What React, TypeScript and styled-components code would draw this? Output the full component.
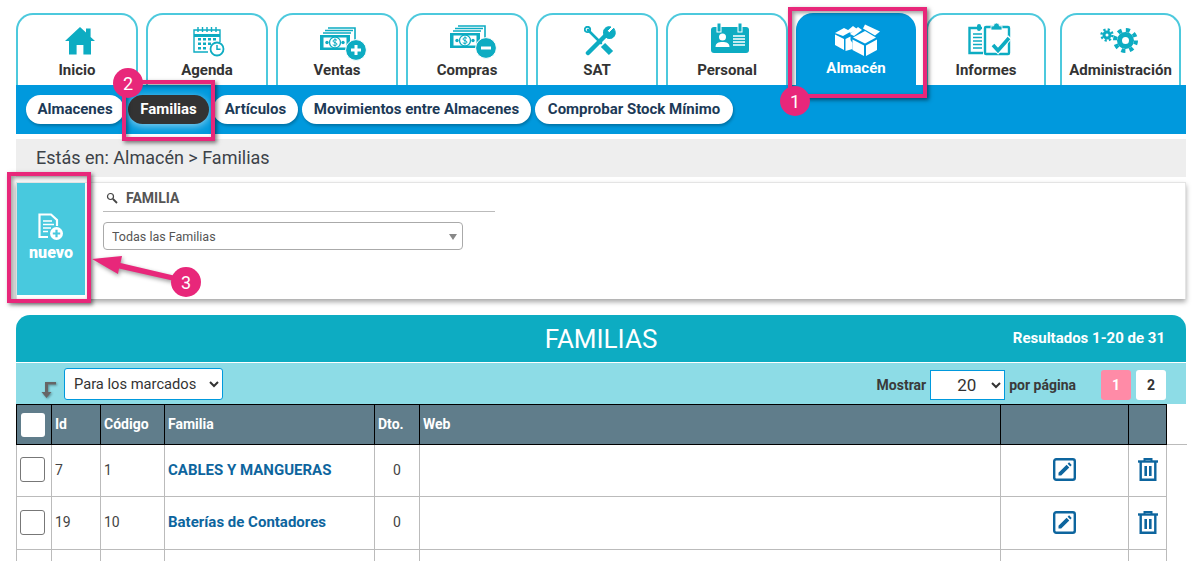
import React from "react";
import styled, { createGlobalStyle } from "styled-components";

const Global = createGlobalStyle`
  html, body { margin: 0; padding: 0; background: #fff; height: 561px; overflow: hidden; }
  body { font-family: Roboto, "Liberation Sans", sans-serif; color: #333; }
  * { box-sizing: border-box; }
`;

const TEAL = "#0dacc2";

const Page = styled.div`
  position: relative;
  width: 1192px;
  height: 561px;
  overflow: hidden;
  padding: 13px 6px 0 16px;
`;
const Tabs = styled.nav`
  display: flex;
  height: 72px;
`;
const Tab = styled.a<{ $w?: number; $after?: number; $active?: boolean }>`
  width: ${(p) => p.$w ?? 122}px;
  margin-right: ${(p) => p.$after ?? 8}px;
  height: 72px;
  display: flex;
  flex-direction: column;
  align-items: center;
  border: ${(p) => (p.$active ? "none" : "2px solid #4cc9dd")};
  border-bottom: none;
  border-radius: 17px 17px 0 0;
  background: ${(p) => (p.$active ? "#0099dd" : "#fff")};
  color: ${(p) => (p.$active ? "#fff" : "#333")};
  font-size: 15px;
  font-weight: 700;
  position: relative;
`;
const TabIcon = styled.span<{ $top: number; $h: number; $shift?: number }>`
  display: block;
  height: ${(p) => p.$h}px;
  margin-top: ${(p) => p.$top}px;
  margin-left: ${(p) => (p.$shift ?? 0) * 2}px;
  svg { display: block; }
`;
const TabLabel = styled.span`
  position: absolute;
  left: 0;
  right: 0;
  top: 46px;
  text-align: center;
  line-height: 18px;
  white-space: nowrap;
`;
const SubNav = styled.div`
  height: 49px;
  background: #0099dd;
  display: flex;
  align-items: flex-start;
  padding: 10px 0 0 10px;
  gap: 4px;
`;
const Pill = styled.a<{ $active?: boolean; $w: number }>`
  width: ${(p) => p.$w}px;
  height: 29px;
  padding-bottom: 2px;
  border-radius: 15px;
  display: flex;
  align-items: center;
  justify-content: center;
  background: ${(p) => (p.$active ? "#333" : "#fff")};
  color: ${(p) => (p.$active ? "#fff" : "#1c3a57")};
  font-weight: 700;
  font-size: 15px;
  white-space: nowrap;
  box-shadow: ${(p) => (p.$active ? "0 2px 9px rgba(255,255,255,.55)" : "1px 2px 3px rgba(0,0,0,.25)")};
`;
const Crumb = styled.div`
  margin-top: 5px;
  height: 38px;
  background: #eee;
  padding-left: 20px;
  font-size: 18px;
  line-height: 38px;
  color: #3c4248;
`;
const Filter = styled.section`
  margin-top: 5px;
  height: 117px;
  border: 1px solid #e4e4e4;
  border-bottom: none;
  display: flex;
  box-shadow: 0 3px 5px rgba(0,0,0,.35);
`;
const NewButton = styled.a`
  width: 68px;
  height: 112px;
  background: #48c9de;
  color: #fff;
  display: flex;
  flex-direction: column;
  align-items: center;
  font-weight: 900;
  font-size: 16px;
  padding-top: 30px;
  line-height: 20px;
  svg { display: block; margin-bottom: 2px; margin-left: -1px; }
`;
const FilterBody = styled.div`
  width: 392px;
  margin-left: 18px;
`;
const FilterTitle = styled.div`
  height: 29px;
  padding-top: 2px;
  border-bottom: 1px solid #bbb;
  display: flex;
  align-items: center;
  gap: 8px;
  padding-left: 3px;
  font-size: 14px;
  font-weight: 700;
  color: #555;
`;
const FilterSelectWrap = styled.div`
  position: relative;
  width: 360px;
  margin-top: 10px;
  &::after {
    content: "";
    position: absolute;
    right: 6px;
    top: 12px;
    border-left: 4px solid transparent;
    border-right: 4px solid transparent;
    border-top: 6px solid #888;
  }
`;
const FilterSelect = styled.select`
  appearance: none;
  width: 100%;
  height: 28px;
  border: 1px solid #aaa;
  border-radius: 4px;
  background: #fff;
  padding: 0 8px;
  font: 400 12.5px Roboto, sans-serif;
  color: #555;
`;
const ResultHead = styled.header`
  margin-top: 16px;
  height: 47px;
  background: ${TEAL};
  border-radius: 14px 14px 0 0;
  color: #fff;
  display: flex;
  align-items: center;
  justify-content: center;
  position: relative;
`;
const ResultTitle = styled.h1`
  margin: 0;
  font-size: 26px;
  font-weight: 400;
  line-height: 46px;
`;
const ResultCount = styled.span`
  position: absolute;
  right: 21px;
  top: 14px;
  font-size: 15px;
  font-weight: 700;
  line-height: 18px;
`;
const ToolRow = styled.div`
  margin-top: 1px;
  height: 41px;
  background: #8ddce6;
  display: flex;
  align-items: flex-start;
  padding-left: 25px;
  padding-right: 20px;
`;
const MarkIcon = styled.span`
  width: 23px;
  margin-top: 19px;
  svg { display: block; filter: drop-shadow(1px 1px 1px rgba(0,0,0,.35)); }
`;
const MarkSelect = styled.select`
  margin-top: 5px;
  width: 159px;
  height: 32px;
  border: 1px solid #0099dd;
  border-radius: 3px;
  background: #fff;
  font: 400 14.7px Roboto, sans-serif;
  color: #333;
  padding-left: 5px;
`;
const PagerArea = styled.div`
  margin-left: auto;
  display: flex;
  align-items: center;
  height: 30px;
  margin-top: 7px;
  font-size: 14px;
  font-weight: 700;
  color: #3a3a3a;
`;
const PerPage = styled.select`
  width: 75px;
  height: 30px;
  margin: 0 4px;
  border: 1px solid #0099dd;
  border-radius: 0;
  background: #fff;
  font: 400 17px Roboto, sans-serif;
  color: #333;
  padding-left: 22px;
`;
const PageBtn = styled.a<{ $on?: boolean; $left: number }>`
  width: 30px;
  height: 30px;
  margin-left: ${(p) => p.$left}px;
  border-radius: 3px;
  background: ${(p) => (p.$on ? "#ff8ba7" : "#fff")};
  color: ${(p) => (p.$on ? "#fff" : "#333")};
  display: flex;
  align-items: center;
  justify-content: center;
`;
const Table = styled.table`
  border-collapse: collapse;
  table-layout: fixed;
  width: 1170px;
`;
const Th = styled.th`
  background: #607d8b;
  border: 1px solid #000;
  height: 40px;
  padding: 0 3px 2px;
  color: #fff;
  font-size: 14px;
  font-weight: 700;
  text-align: left;
`;
const Spare = styled.th`
  border: none;
  border-bottom: 1px solid #bbb;
`;
const Td = styled.td<{ $center?: boolean; $h: number }>`
  border: 1px solid #bbb;
  height: ${(p) => p.$h}px;
  padding: 0 3px 2px;
  font-size: 14px;
  color: #444;
  text-align: ${(p) => (p.$center ? "center" : "left")};
  svg { display: block; margin: 0 auto; }
`;
const NoCell = styled.td``;
const Name = styled.a`
  color: #0d659e;
  font-size: 15px;
  font-weight: 700;
`;
const HeadCheck = styled.span`
  display: block;
  width: 24px;
  height: 24px;
  margin: 2px 0 0 1px;
  background: #fff;
  border-radius: 3px;
`;
const RowCheck = styled.span`
  display: block;
  width: 25px;
  height: 25px;
  background: #fff;
  border: 1px solid #777;
  border-radius: 3px;
`;
const Frame = styled.div<{ $x: number; $y: number; $w: number; $h: number }>`
  position: absolute;
  left: ${(p) => p.$x}px;
  top: ${(p) => p.$y}px;
  width: ${(p) => p.$w}px;
  height: ${(p) => p.$h}px;
  border: 4px solid #e8277a;
  box-shadow: 2px 2px 4px rgba(0,0,0,.5), inset 2px 2px 4px rgba(0,0,0,.4);
`;
const Badge = styled.div<{ $x: number; $y: number }>`
  position: absolute;
  left: ${(p) => p.$x - 15}px;
  top: ${(p) => p.$y - 15}px;
  width: 30px;
  height: 30px;
  border-radius: 50%;
  background: #e8277a;
  color: #fff;
  font-size: 18px;
  font-weight: 400;
  display: flex;
  align-items: center;
  justify-content: center;
`;
const ArrowMark = styled.svg`
  position: absolute;
  left: 85px;
  top: 250px;
  filter: drop-shadow(1px 2px 2px rgba(0,0,0,.4));
`;

const HomeIcon = () => (
  <svg width="30" height="28" viewBox="0 0 30 28" fill={TEAL}>
    <path d="M15 0 21 5.600V1.500h4.600V10L30 14h-4v13.500h-7.600V18h-6.800v9.500H4V14H0Z" />
  </svg>
);
const CalendarIcon = () => (
  <svg width="32" height="31" viewBox="0 0 32 31" fill="none" stroke={TEAL} strokeWidth="1.400">
    <path d="M15 26H1V4h26v12" />
    <path d="M1 9.500h26" strokeWidth="3" />
    <path d="M5 1v5M9.500 1v5M14 1v5M18.500 1v5M23 1v5" />
    <path fill={TEAL} stroke="none" d="M5 12h3v2.500H5zM10 12h3v2.500h-3zM15 12h3v2.500h-3zM20 12h3v2.500h-3zM5 16.500h3V19H5zM10 16.500h3V19h-3zM15 16.500h3V19h-3zM5 21h3v2.500H5zM10 21h3v2.500h-3z" />
    <circle cx="24" cy="23" r="6.500" fill="#fff" strokeWidth="1.800" />
    <path d="M24 19v4.300h3.500" strokeWidth="1.500" />
  </svg>
);
const MoneyIcon = ({ minus }: { minus?: boolean }) => (
  <svg width="47" height="34" viewBox="0 0 47 34" fill="none" stroke={TEAL}>
    <path d="M8 1h27v13M5 3.500h28M3 6h28" strokeWidth="1.600" />
    <rect x="0" y="8" width="30" height="15" fill="#fff" stroke="none" />
    <path d="M0 8h30v15H0ZM3.500 10.500v10h23v-10Z" fill={TEAL} stroke="none" fillRule="evenodd" />
    <circle cx="15" cy="15.500" r="5.500" fill="#fff" strokeWidth="1.300" />
    <circle cx="7" cy="15.500" r="1.700" fill={TEAL} stroke="none" />
    <circle cx="23" cy="15.500" r="1.700" fill={TEAL} stroke="none" />
    <path d="M17 13.300c-1-1-4-1-4 .8 0 2 4 1 4 3 0 1.700-3 1.800-4.200.6M15 11.300v8.400" strokeWidth="1" />
    <circle cx="36" cy="23" r="10.400" fill={TEAL} stroke="#fff" strokeWidth="1" />
    <path d={minus ? "M31 23h10" : "M31 23h10M36 18v10"} stroke="#fff" strokeWidth="3" />
  </svg>
);
const ToolsIcon = () => (
  <svg width="32" height="30" viewBox="0 0 32 30" fill="none" stroke={TEAL} strokeLinecap="round">
    <path d="M22 9 4 27" strokeWidth="4.500" />
    <path d="M29.500 2.500 25.500 6.500l-1.500-.5-.5-1.500 3.500-3.500C22 -.5 18 4 20 9l3 3c5 2 9.500-2 8-7Z" fill={TEAL} strokeWidth="1" />
    <path d="M4 4 17 17" strokeWidth="2.600" />
    <circle cx="3.500" cy="3.500" r="2.700" strokeWidth="1.800" />
    <path d="M19 19 27 27" strokeWidth="6" strokeLinecap="butt" />
  </svg>
);
const BadgeIcon = () => (
  <svg width="38" height="30" viewBox="0 0 38 30" fill={TEAL}>
    <rect y="4" width="38" height="26" rx="3" />
    <rect x="6" y="0" width="4" height="9" fill={TEAL} stroke="#fff" strokeWidth="1" />
    <rect x="27" y="0" width="4" height="9" fill={TEAL} stroke="#fff" strokeWidth="1" />
    <circle cx="11.500" cy="14" r="3.500" fill="#fff" />
    <path d="M4.500 24c0-4 3-5 7-5s7 1 7 5Z" fill="#fff" />
    <path d="M22 13h12M22 16h12M22 19h12M22 22h12" stroke="#fff" strokeWidth="1.500" />
  </svg>
);
const BoxesIcon = () => (
  <svg width="46" height="32" viewBox="0 0 46 32" fill="#fff">
    <path d="M0 9 9 4l7 3.500L8 12Z" />
    <path d="M0 10.500l9 4.500v11l-9-5Z" />
    <path d="M10.500 15l5-2.500V16l2 3v6l-7 2Z" />
    <path d="M12 7 18 2l4 3-6 4Z" />
    <path d="M15 10 23 3l4 3-8 6Z" />
    <path d="M18 13.500 30 7l11 6.500-11 6Z" />
    <path d="M30 .5l15 7-5 4-12-7Z" />
    <path d="M17.500 15.500 29 21.500v10.500L17.500 26Z" />
    <path d="M31 21.500l11-6V26l-11 6Z" />
  </svg>
);
const ReportsIcon = () => (
  <svg width="45" height="33" viewBox="0 0 45 33" fill="none" stroke={TEAL}>
    <path d="M14 5H1.500v25H15" strokeWidth="2.400" />
    <path d="M5 11h9M5 14.500h9M5 18h9M5 21.500h9M5 25h9" strokeWidth="1.600" />
    <rect x="9" y="1" width="4" height="7" rx="2" fill={TEAL} stroke="none" />
    <rect x="17" y="4" width="24" height="27" rx="1" fill="#fff" strokeWidth="2.400" />
    <path d="M23 7V3h2.500a3 3 0 0 1 6 0H34v4Z" fill={TEAL} stroke="#fff" strokeWidth=".8" />
    <path d="M24 22l6 6 12-14" strokeWidth="5" stroke="#fff" />
    <path d="M25 22l5 5.500L41 15" strokeWidth="3.600" />
  </svg>
);
const GearsIcon = () => (
  <svg width="38" height="25" viewBox="0 0 38 25" fill="none" stroke={TEAL}>
    <circle cx="7" cy="7" r="3" strokeWidth="3" />
    <circle cx="7" cy="7" r="5.500" strokeWidth="2.400" strokeDasharray="2.200 2.120" />
    <circle cx="25.500" cy="12.500" r="6" strokeWidth="5" />
    <circle cx="25.500" cy="12.500" r="10.500" strokeWidth="4" strokeDasharray="4.100 4.150" />
  </svg>
);
const NewDocIcon = () => (
  <svg width="26" height="28" viewBox="0 0 26 28" fill="none" stroke="#fff">
    <path d="M10 24H1.500V1.500H13L19 7v6" strokeWidth="2.200" />
    <path d="M5 8h9M5 11.500h11M5 15h8M5 18.500h5" strokeWidth="1.400" />
    <circle cx="18.500" cy="20.500" r="6.500" fill="#fff" stroke="none" />
    <path d="M14.800 20.500h7.400M18.500 16.800v7.400" stroke="#48c9de" strokeWidth="2.200" />
  </svg>
);
const SearchMini = () => (
  <svg width="12" height="12" viewBox="0 0 12 12" fill="none" stroke="#444" strokeWidth="1.200">
    <circle cx="4.500" cy="4.500" r="3" />
    <path d="M7 7l4 4" strokeWidth="1.800" />
  </svg>
);
const TurnIcon = () => (
  <svg width="16" height="16" viewBox="0 0 16 16" fill="#666">
    <path d="M15 0v2.500H7V10h3.500L5.500 16 .5 10H4V0Z" />
  </svg>
);
const EditIcon = () => (
  <svg width="23" height="23" viewBox="0 0 23 23" fill="none">
    <rect x="1.200" y="1.200" width="20.600" height="20.600" rx="2" stroke="#0d659e" strokeWidth="2.400" />
    <path d="M5.500 17.500v-2.700L13.600 6.700l2.700 2.700L8.200 17.500Z M14.600 5.700l1.500-1.400 2.600 2.600-1.400 1.500Z" fill="#0d659e" />
  </svg>
);
const TrashIcon = () => (
  <svg width="20" height="23" viewBox="0 0 20 23" fill="none" stroke="#0d659e">
    <path d="M0 3.500h20" strokeWidth="2.400" />
    <path d="M6.500 3V1h7v2" strokeWidth="2" />
    <path d="M2.700 4v17.800h14.600V4" strokeWidth="2.400" />
    <path d="M7.700 8v10M12.300 8v10" strokeWidth="2.600" />
  </svg>
);

const rows = [
  { id: 7, code: 1, name: "CABLES Y MANGUERAS", h: 52 },
  { id: 19, code: 10, name: "Baterías de Contadores", h: 53 },
];

export default function App() {
  return (
    <Page>
      <Global />
      <Tabs>
        <Tab><TabIcon $top={12} $h={28} $shift={3}><HomeIcon /></TabIcon><TabLabel>Inicio</TabLabel></Tab>
        <Tab><TabIcon $top={11} $h={31} $shift={2}><CalendarIcon /></TabIcon><TabLabel>Agenda</TabLabel></Tab>
        <Tab><TabIcon $top={12} $h={34} $shift={6}><MoneyIcon /></TabIcon><TabLabel>Ventas</TabLabel></Tab>
        <Tab><TabIcon $top={10} $h={34} $shift={6}><MoneyIcon minus /></TabIcon><TabLabel>Compras</TabLabel></Tab>
        <Tab><TabIcon $top={11} $h={30} $shift={3}><ToolsIcon /></TabIcon><TabLabel>SAT</TabLabel></Tab>
        <Tab><TabIcon $top={8} $h={30} $shift={3}><BadgeIcon /></TabIcon><TabLabel>Personal</TabLabel></Tab>
        <Tab $active $w={120} $after={10}><TabIcon $top={11} $h={32} $shift={2}><BoxesIcon /></TabIcon><TabLabel>Almacén</TabLabel></Tab>
        <Tab $w={120} $after={14}><TabIcon $top={8} $h={33} $shift={4}><ReportsIcon /></TabIcon><TabLabel>Informes</TabLabel></Tab>
        <Tab $w={121} $after={0}><TabIcon $top={13} $h={25} $shift={-2}><GearsIcon /></TabIcon><TabLabel>Administración</TabLabel></Tab>
      </Tabs>
      <SubNav>
        <Pill $w={98}>Almacenes</Pill>
        <Pill $w={81} $active>Familias</Pill>
        <Pill $w={85}>Artículos</Pill>
        <Pill $w={229}>Movimientos entre Almacenes</Pill>
        <Pill $w={198}>Comprobar Stock Mínimo</Pill>
      </SubNav>
      <Crumb>Estás en: Almacén &gt; Familias</Crumb>
      <Filter>
        <NewButton><NewDocIcon />nuevo</NewButton>
        <FilterBody>
          <FilterTitle><SearchMini />FAMILIA</FilterTitle>
          <FilterSelectWrap>
            <FilterSelect defaultValue="all"><option value="all">Todas las Familias</option></FilterSelect>
          </FilterSelectWrap>
        </FilterBody>
      </Filter>
      <ResultHead>
        <ResultTitle>FAMILIAS</ResultTitle>
        <ResultCount>Resultados 1-20 de 31</ResultCount>
      </ResultHead>
      <ToolRow>
        <MarkIcon><TurnIcon /></MarkIcon>
        <MarkSelect defaultValue="m"><option value="m">Para los marcados</option></MarkSelect>
        <PagerArea>
          Mostrar
          <PerPage defaultValue="20"><option value="20">20</option></PerPage>
          por página
          <PageBtn $on $left={25}>1</PageBtn>
          <PageBtn $left={5}>2</PageBtn>
        </PagerArea>
      </ToolRow>
      <Table>
        <colgroup>
          <col width="35" /><col width="49" /><col width="64" /><col width="210" /><col width="45" />
          <col width="581" /><col width="128" /><col width="38" /><col width="20" />
        </colgroup>
        <thead>
          <tr>
            <Th><HeadCheck /></Th><Th>Id</Th><Th>Código</Th><Th>Familia</Th><Th>Dto.</Th><Th>Web</Th><Th /><Th /><Spare />
          </tr>
        </thead>
        <tbody>
          {rows.map((r) => (
            <tr key={r.id}>
              <Td $h={r.h}><RowCheck /></Td>
              <Td $h={r.h}>{r.id}</Td>
              <Td $h={r.h}>{r.code}</Td>
              <Td $h={r.h}><Name>{r.name}</Name></Td>
              <Td $h={r.h} $center>0</Td>
              <Td $h={r.h} />
              <Td $h={r.h} $center><EditIcon /></Td>
              <Td $h={r.h} $center><TrashIcon /></Td>
              <NoCell />
            </tr>
          ))}
          <tr>
            {[0, 1, 2, 3, 4, 5, 6, 7].map((c) => <Td key={c} $h={30} />)}
            <NoCell />
          </tr>
        </tbody>
      </Table>
      <Frame $x={788} $y={7} $w={139} $h={91} />
      <Frame $x={122} $y={80} $w={93} $h={61} />
      <Frame $x={7} $y={172} $w={84} $h={131} />
      <ArrowMark width="110" height="40" viewBox="85 250 110 40" fill="#e8277a">
        <path d="M92 259 122 256 120.500 263 180 277 179 282 119 268.500 118 274Z" />
      </ArrowMark>
      <Badge $x={795} $y={101}>1</Badge>
      <Badge $x={128} $y={83}>2</Badge>
      <Badge $x={186} $y={282}>3</Badge>
    </Page>
  );
}
